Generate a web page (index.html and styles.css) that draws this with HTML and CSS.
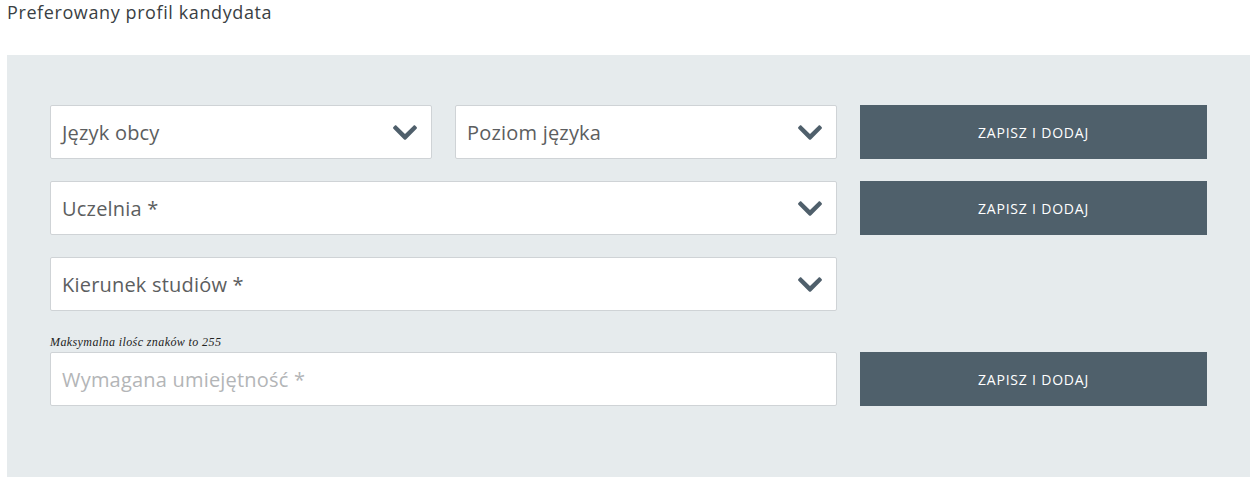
FILE: index.html
```html
<!DOCTYPE html>
<html lang="pl">
<head>
<meta charset="utf-8">
<link rel="stylesheet" href="styles.css">
</head>
<body>
<h2 class="title">Preferowany profil kandydata</h2>
<div class="panel">
  <div class="row">
    <div class="select half"><span>Język obcy</span><svg class="chev" viewBox="5 122 438 267"><path d="M207.029 381.476L12.686 187.132c-9.373-9.373-9.373-24.569 0-33.941l22.667-22.667c9.357-9.357 24.522-9.375 33.901-.04L224 284.505l154.745-154.021c9.379-9.335 24.544-9.317 33.901.04l22.667 22.667c9.373 9.373 9.373 24.569 0 33.941L240.971 381.476c-9.373 9.372-24.569 9.372-33.942 0z"/></svg></div>
    <div class="select half"><span>Poziom języka</span><svg class="chev" viewBox="5 122 438 267"><path d="M207.029 381.476L12.686 187.132c-9.373-9.373-9.373-24.569 0-33.941l22.667-22.667c9.357-9.357 24.522-9.375 33.901-.04L224 284.505l154.745-154.021c9.379-9.335 24.544-9.317 33.901.04l22.667 22.667c9.373 9.373 9.373 24.569 0 33.941L240.971 381.476c-9.373 9.372-24.569 9.372-33.942 0z"/></svg></div>
    <button class="btn">ZAPISZ I DODAJ</button>
  </div>
  <div class="row">
    <div class="select wide"><span>Uczelnia *</span><svg class="chev" viewBox="5 122 438 267"><path d="M207.029 381.476L12.686 187.132c-9.373-9.373-9.373-24.569 0-33.941l22.667-22.667c9.357-9.357 24.522-9.375 33.901-.04L224 284.505l154.745-154.021c9.379-9.335 24.544-9.317 33.901.04l22.667 22.667c9.373 9.373 9.373 24.569 0 33.941L240.971 381.476c-9.373 9.372-24.569 9.372-33.942 0z"/></svg></div>
    <button class="btn">ZAPISZ I DODAJ</button>
  </div>
  <div class="row">
    <div class="select wide"><span>Kierunek studiów *</span><svg class="chev" viewBox="5 122 438 267"><path d="M207.029 381.476L12.686 187.132c-9.373-9.373-9.373-24.569 0-33.941l22.667-22.667c9.357-9.357 24.522-9.375 33.901-.04L224 284.505l154.745-154.021c9.379-9.335 24.544-9.317 33.901.04l22.667 22.667c9.373 9.373 9.373 24.569 0 33.941L240.971 381.476c-9.373 9.372-24.569 9.372-33.942 0z"/></svg></div>
  </div>
  <div class="note">Maksymalna ilośc znaków to 255</div>
  <div class="row last">
    <div class="input wide"><span>Wymagana umiejętność *</span></div>
    <button class="btn">ZAPISZ I DODAJ</button>
  </div>
</div>
</body>
</html>
```
FILE: styles.css
```css
html, body {
  margin: 0;
  padding: 0;
  background: #ffffff;
}
body {
  font-family: "Open Sans", "Lato", sans-serif;
  width: 1255px;
  height: 482px;
  overflow: hidden;
}
.title {
  margin: 0;
  padding: 0 0 0 7px;
  height: 55px;
  box-sizing: border-box;
  font-size: 18px;
  font-weight: 400;
  line-height: 24px;
  letter-spacing: 0.6px;
  color: #3a3f44;
}
.panel {
  margin-left: 7px;
  width: 1243px;
  height: 422px;
  box-sizing: border-box;
  background: #e6ebed;
  padding: 50px 0 0 43px;
}
.row {
  display: flex;
  gap: 23px;
  height: 54px;
  margin-bottom: 22px;
}
.row.last {
  margin-bottom: 0;
}
.select, .input {
  box-sizing: border-box;
  height: 54px;
  background: #fff;
  border: 1px solid #cfd3d6;
  border-radius: 2px;
  display: flex;
  align-items: center;
  justify-content: space-between;
  padding: 0 14px 0 11px;
  font-size: 20px;
  letter-spacing: 0.2px;
  color: #5c5e60;
}
.half { width: 382px; }
.wide { width: 787px; }
.input { color: #b3b5b7; }
.chev {
  width: 24px;
  height: 15px;
  fill: #4f5f6b;
}
.btn {
  width: 347px;
  height: 54px;
  border: none;
  background: #4f606b;
  color: #ffffff;
  font-family: "Open Sans", "Lato", sans-serif;
  font-size: 14px;
  letter-spacing: 0.8px;
  padding: 0;
}
.note {
  font-family: "Liberation Serif", serif;
  font-style: italic;
  font-size: 12px;
  letter-spacing: 0.4px;
  line-height: 13px;
  color: #222;
  height: 19px;
  padding-top: 3px;
  box-sizing: border-box;
}
```
